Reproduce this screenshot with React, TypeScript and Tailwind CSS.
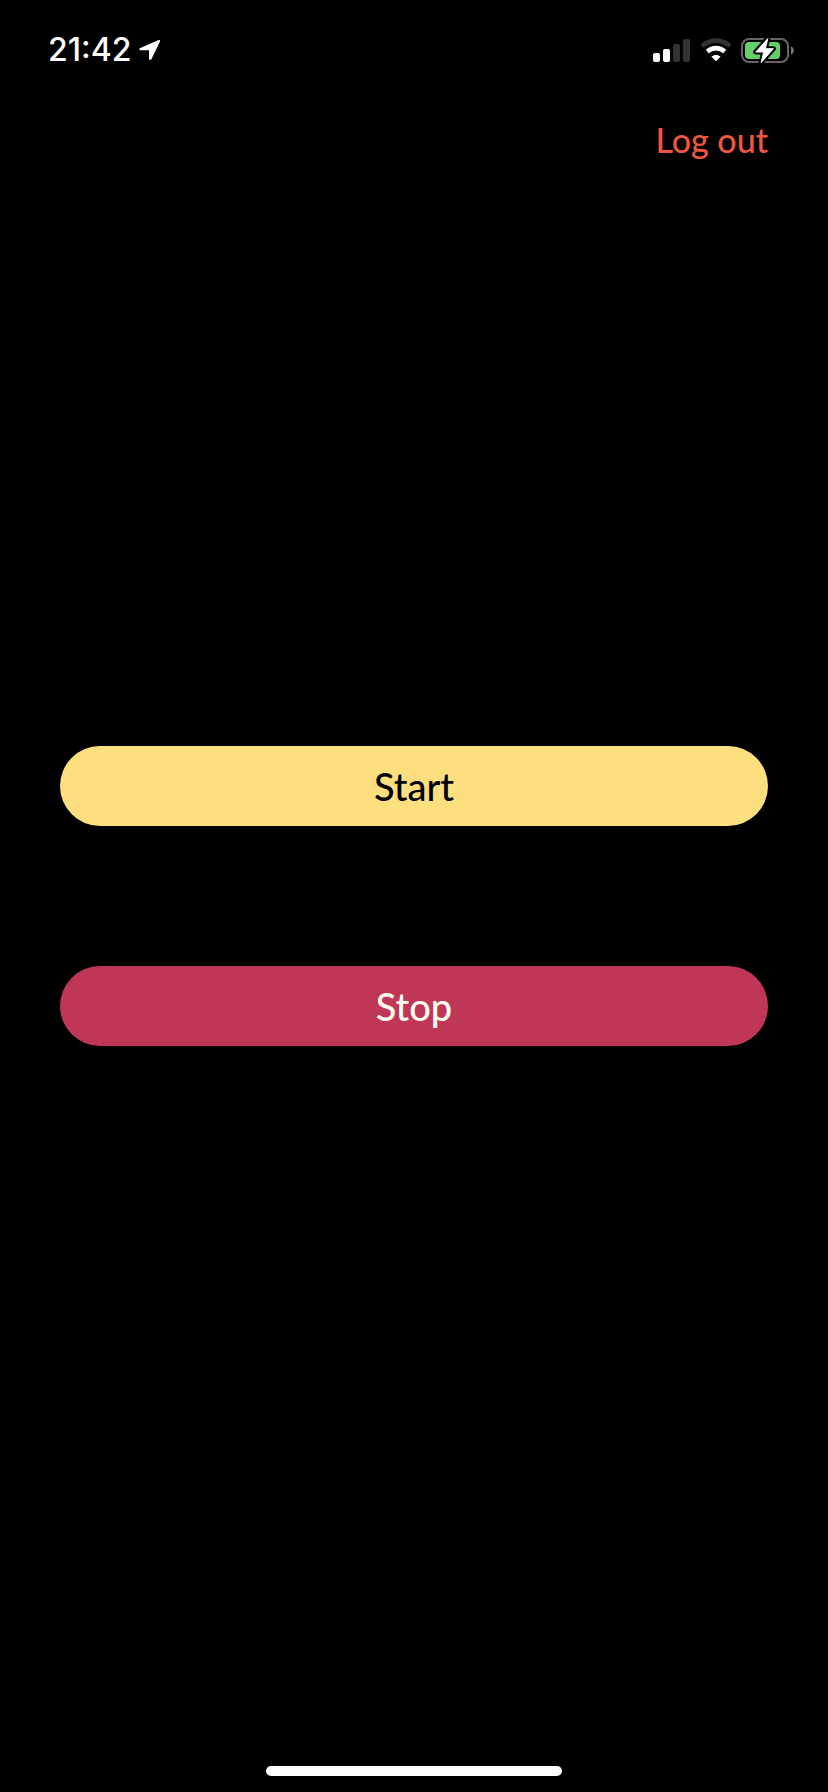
function StatusBar() {
  return (
    <div className="flex h-24 items-center justify-between pl-12 pr-8 pt-1 text-white">
      <div className="flex items-center gap-2">
        <time className="font-['Inter',sans-serif] text-[32px] font-medium leading-8">21:42</time>
        <svg className="h-6 w-[22px]" viewBox="0 0 22 24" fill="currentColor" aria-hidden="true">
          <path d="M19.7 2.1 1.3 9.9C-.2 10.6.1 12.2 1.6 12.2H10V20.6C10 22.4 11.8 22.5 12.5 21L21 3.6C21.5 2.4 20.9 1.7 19.7 2.1Z" />
        </svg>
      </div>
      <div className="flex items-center">
        <svg className="mr-2.5 h-6 w-[37px]" viewBox="0 0 37 24" role="img" aria-label="Signal">
          <rect x="0" y="15" width="7" height="9" rx="2" fill="#fff" />
          <rect x="10" y="11" width="7" height="13" rx="2" fill="#fff" />
          <rect x="20" y="6" width="7" height="18" rx="2" fill="#333" />
          <rect x="30" y="1" width="7" height="23" rx="2" fill="#333" />
        </svg>
        <svg className="mr-2 h-6 w-8" viewBox="0 0 32 24" fill="none" role="img" aria-label="Wi-Fi">
          <path d="M2 7.9C10 .9 22 .9 30 7.9" stroke="#333" strokeWidth="4.6" />
          <path d="M7.3 13.5C12.4 9 19.6 9 24.7 13.5" stroke="#fff" strokeWidth="4.6" />
          <path d="M11.4 18.6C14 16.4 18 16.4 20.6 18.6L16.6 22.8Q16 23.4 15.4 22.8Z" fill="#fff" />
        </svg>
        <svg className="h-7 w-14" viewBox="0 0 56 28" role="img" aria-label="Battery charging">
          <rect x="2" y="3" width="46" height="23" rx="7" fill="none" stroke="#666" strokeWidth="2" />
          <rect x="5" y="6" width="35" height="17" rx="4" fill="#65cf69" />
          <path d="M51 10.5C54.8 11.5 54.8 17.5 51 18.5Z" fill="#777" />
          <path d="M27.8 2.5 15.8 16H23.7L21.2 26.5 33.4 12.7H25.4Z" fill="#000" stroke="#000" strokeWidth="5" strokeLinejoin="round" />
          <path d="M27.8 2.5 15.8 16H23.7L21.2 26.5 33.4 12.7H25.4Z" fill="#fff" stroke="#fff" strokeWidth="1" strokeLinejoin="round" />
        </svg>
      </div>
    </div>
  );
}

export default function App() {
  return (
    <div className="grid min-h-screen grid-rows-[1fr_auto_1fr] bg-black font-['Lato',sans-serif] font-medium">
      <header>
        <StatusBar />
        <div className="flex justify-end px-[60px] pt-5">
          <button type="button" className="text-[34px] leading-12 text-[#ee5644]">Log out</button>
        </div>
      </header>
      <main className="flex flex-col gap-[140px] px-[60px]">
        <button type="button" className="h-20 rounded-full bg-[#fddf80] text-[38px] leading-12 text-black">Start</button>
        <button type="button" className="h-20 rounded-full bg-[#bf3656] text-[38px] leading-12 text-[#fffff0]">Stop</button>
      </main>
      <footer className="flex items-end justify-center pb-4">
        <div className="h-2.5 w-[296px] rounded-full bg-white" />
      </footer>
    </div>
  );
}
